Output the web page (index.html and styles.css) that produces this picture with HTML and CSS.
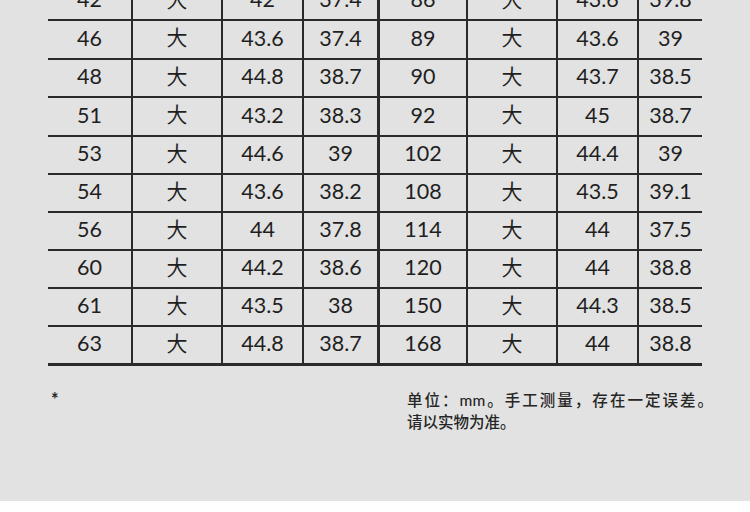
FILE: index.html
```html
<!DOCTYPE html>
<html lang="zh-CN">
<head>
<meta charset="utf-8">
<title>尺码表</title>
<link rel="stylesheet" href="styles.css">
</head>
<body>
<div class="sheet">
  <div class="table">
    <div class="c">42</div><div class="c cjk">大</div><div class="c">42</div><div class="c mid">37.4</div><div class="c">86</div><div class="c cjk">大</div><div class="c">43.6</div><div class="c end">39.8</div>
    <div class="c">46</div><div class="c cjk">大</div><div class="c">43.6</div><div class="c mid">37.4</div><div class="c">89</div><div class="c cjk">大</div><div class="c">43.6</div><div class="c end">39</div>
    <div class="c">48</div><div class="c cjk">大</div><div class="c">44.8</div><div class="c mid">38.7</div><div class="c">90</div><div class="c cjk">大</div><div class="c">43.7</div><div class="c end">38.5</div>
    <div class="c">51</div><div class="c cjk">大</div><div class="c">43.2</div><div class="c mid">38.3</div><div class="c">92</div><div class="c cjk">大</div><div class="c">45</div><div class="c end">38.7</div>
    <div class="c">53</div><div class="c cjk">大</div><div class="c">44.6</div><div class="c mid">39</div><div class="c">102</div><div class="c cjk">大</div><div class="c">44.4</div><div class="c end">39</div>
    <div class="c">54</div><div class="c cjk">大</div><div class="c">43.6</div><div class="c mid">38.2</div><div class="c">108</div><div class="c cjk">大</div><div class="c">43.5</div><div class="c end">39.1</div>
    <div class="c">56</div><div class="c cjk">大</div><div class="c">44</div><div class="c mid">37.8</div><div class="c">114</div><div class="c cjk">大</div><div class="c">44</div><div class="c end">37.5</div>
    <div class="c">60</div><div class="c cjk">大</div><div class="c">44.2</div><div class="c mid">38.6</div><div class="c">120</div><div class="c cjk">大</div><div class="c">44</div><div class="c end">38.8</div>
    <div class="c">61</div><div class="c cjk">大</div><div class="c">43.5</div><div class="c mid">38</div><div class="c">150</div><div class="c cjk">大</div><div class="c">44.3</div><div class="c end">38.5</div>
    <div class="c last">63</div><div class="c cjk last">大</div><div class="c last">44.8</div><div class="c mid last">38.7</div><div class="c last">168</div><div class="c cjk last">大</div><div class="c last">44</div><div class="c end last">38.8</div>
  </div>
  <div class="notes">
    <div class="star">*</div>
    <div class="note">
      <div class="line1">单位：mm。手工测量，存在一定误差。</div>
      <div class="line2">请以实物为准。</div>
    </div>
  </div>
</div>
</body>
</html>
```

FILE: styles.css
```css
* { box-sizing: border-box; }
html, body { margin: 0; padding: 0; background: #ffffff; }
body { font-family: "Lato", "Noto Sans CJK SC", sans-serif; color: #1f1f1f; }

.sheet {
  height: 501px;
  background: #e2e2e2;
  overflow: hidden;
}

.table {
  display: grid;
  width: 654px;
  margin: -17px 0 0 48px;
  grid-template-columns: 85px 90px 81px 76px 88px 90px 81px 63px;
  grid-template-rows: 38px 39px 38px 39px 38px 38px 38px 38px 38px 39px;
}

.c {
  display: flex;
  align-items: center;
  justify-content: center;
  border-right: 2px solid #2a2a2a;
  border-bottom: 2px solid #2a2a2a;
  font-size: 21.5px;
  line-height: 1;
  padding-bottom: 2px;
}
.c.cjk { font-family: "Noto Sans CJK SC", sans-serif; font-size: 21px; padding-bottom: 6px; }
.c.mid { border-right-width: 3px; }
.c.end { border-right: none; }
.c.last { border-bottom-width: 3px; }

.notes {
  display: grid;
  grid-template-columns: 359px 306px;
  margin: 23px 0 0 48px;
  color: #262626;
  font-size: 15.5px;
  line-height: 22px;
}
.star { padding-left: 3px; font-size: 18px; font-weight: 700; line-height: 20px; }
.note { font-family: "Lato", "Noto Sans CJK SC", sans-serif; font-weight: 500; }
.line1 { text-align: justify; text-align-last: justify; }
.line2 { text-align: left; }
```
